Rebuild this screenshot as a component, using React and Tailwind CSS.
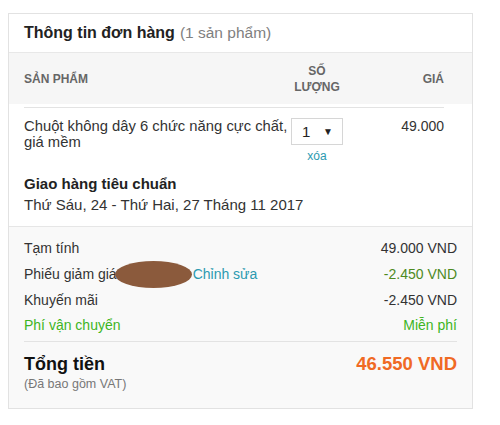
const summaryRows = [
  { label: "Tạm tính", value: "49.000 VND", valueClass: "text-[#333]" },
  { label: "Phiếu giảm giá", value: "-2.450 VND", valueClass: "text-[#4d8a1f]", voucher: true },
  { label: "Khuyến mãi", value: "-2.450 VND", valueClass: "text-[#333]" },
];

const App = () => {
  return (
    <div className="min-h-[425px] bg-white pt-[13px] pl-[8px] font-['Liberation_Sans',Arial,sans-serif] text-[#333]">
      <div className="w-[465px] border border-[#e2e2e2] bg-white">
        {/* Header */}
        <div className="flex h-[39px] items-center border-b border-[#e8e8e8] px-[15px]">
          <span className="text-[16px] font-bold text-[#222]">Thông tin đơn hàng</span>
          <span className="ml-[5px] text-[15.5px] text-[#808080]">(1 sản phẩm)</span>
        </div>

        {/* Table head */}
        <div className="flex h-[51px] items-center bg-[#f6f6f6] pl-[15px] pr-[28px] text-[12px] font-bold uppercase leading-[16px] text-[#666]">
          <div className="w-[262px]">Sản phẩm</div>
          <div className="w-[62px] text-center">
            Số
            <br />
            Lượng
          </div>
          <div className="flex-1 text-right">Giá</div>
        </div>
        <div className="mt-[3px] ml-[15px] mr-[28px] border-t border-[#e3e3e3]" />

        {/* Product row */}
        <div className="flex pl-[15px] pr-[28px] pt-[10px] text-[14.8px] leading-[16px]">
          <div className="w-[272px] shrink-0">Chuột không dây 6 chức năng cực chất, giá mềm</div>
          <div className="-ml-[10px] flex w-[62px] shrink-0 flex-col items-center">
            <div className="flex h-[27px] w-[52px] items-center justify-between border border-[#d6d6d6] bg-white pl-[10px] pr-[9px] text-[15px] text-[#222]">
              <span>1</span>
              <span className="text-[10px]">▼</span>
            </div>
            <span className="mt-[3px] text-[12px] text-[#2b9ab0]">xóa</span>
          </div>
          <div className="flex-1 text-right text-[14px] leading-[16px]">49.000</div>
        </div>

        {/* Shipping */}
        <div className="px-[15px] pt-[10px] pb-[10px]">
          <div className="text-[15px] font-bold leading-[20px] text-[#222]">Giao hàng tiêu chuẩn</div>
          <div className="text-[15px] leading-[22px] text-[#333]">Thứ Sáu, 24 - Thứ Hai, 27 Tháng 11 2017</div>
        </div>

        {/* Summary */}
        <div className="border-t border-[#e6e6e6] bg-[#f9f9f9] px-[15px] pt-[8px] pb-[16px]">
          {summaryRows.map((row) => (
            <div key={row.label} className="flex h-[26px] items-center justify-between text-[14px]">
              <div className="flex items-center">
                <span>{row.label}</span>
                {row.voucher && (
                  <>
                    <span className="-ml-[2px] h-[27px] w-[77px] rounded-[50%] bg-[#8b5a3c]" />
                    <span className="ml-[1px] text-[#2b9ab0]">Chỉnh sửa</span>
                  </>
                )}
              </div>
              <span className={row.valueClass}>{row.value}</span>
            </div>
          ))}
          <div className="flex h-[24px] items-center justify-between text-[14px] text-[#3db523]">
            <span>Phí vận chuyển</span>
            <span>Miễn phí</span>
          </div>
          <div className="mt-[4px] border-t border-[#e3e3e3] pt-[10px]">
            <div className="flex items-center justify-between">
              <span className="text-[18px] font-bold leading-[24px] text-[#111]">Tổng tiền</span>
              <span className="text-[18.5px] font-bold leading-[24px] text-[#f06a24]">46.550 VND</span>
            </div>
            <div className="text-[12.5px] leading-[16px] text-[#777]">(Đã bao gồm VAT)</div>
          </div>
        </div>
      </div>
    </div>
  );
};

export default App;
